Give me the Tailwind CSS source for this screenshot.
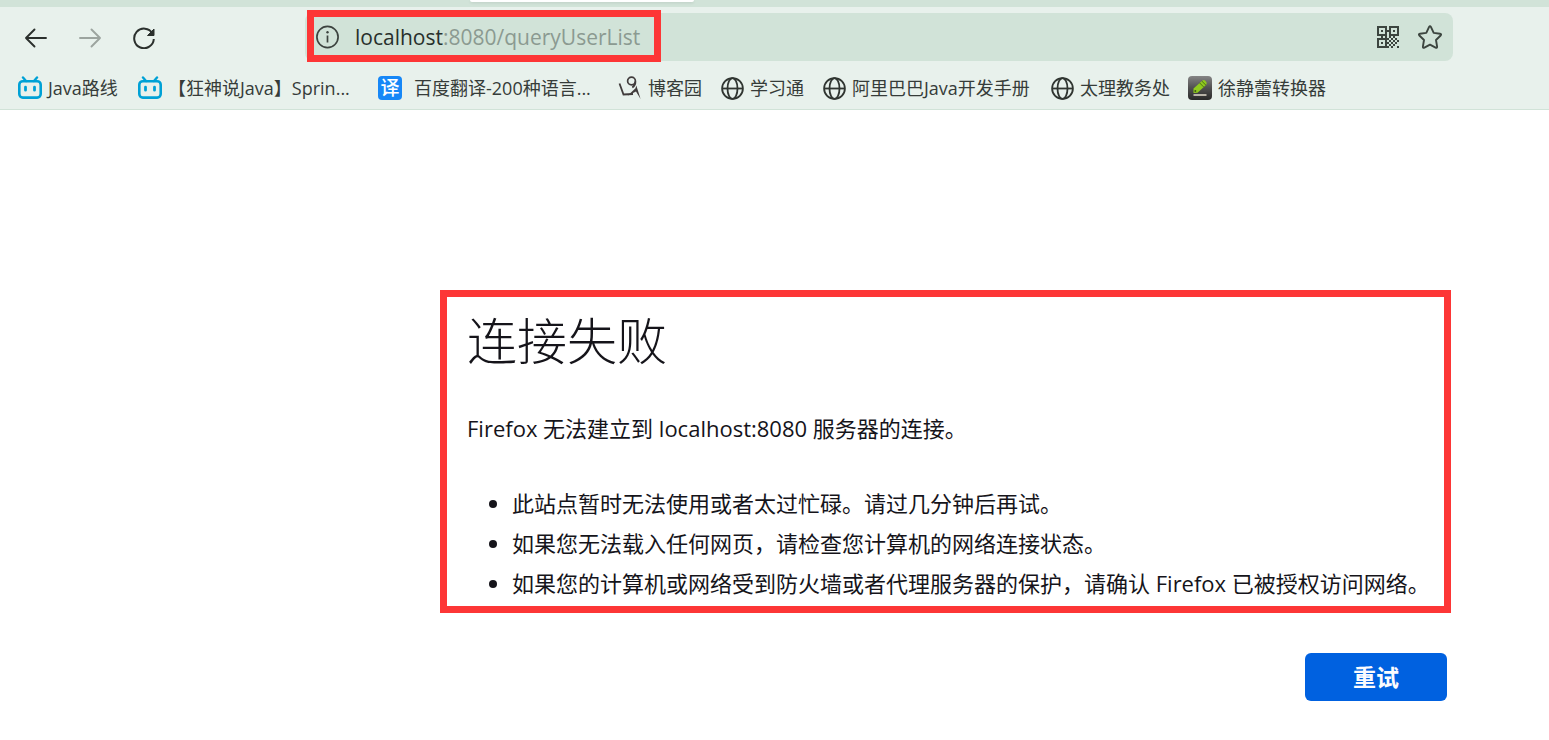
<!DOCTYPE html>
<html lang="zh-CN">
<head>
<meta charset="utf-8">
<meta name="viewport" content="width=device-width, initial-scale=1">
<title>连接失败</title>
<script src="https://cdn.jsdelivr.net/npm/@tailwindcss/browser@4"></script>
</head>
<body class="bg-white font-['Open_Sans','Noto_Sans_CJK_SC',sans-serif] text-[#15141a]">
<svg class="hidden" aria-hidden="true">
  <symbol id="tv" viewBox="0 0 24 24">
    <path d="M5 1.500 8 5M19 1.500 16 5" stroke="#00a1d6" stroke-width="2.400" stroke-linecap="round" fill="none"/>
    <rect x="1.300" y="5.200" width="21.400" height="16.400" rx="3.500" fill="none" stroke="#00a1d6" stroke-width="2.600"/>
    <path d="M7.500 11.200v3M16.500 11.200v3" stroke="#00a1d6" stroke-width="2.800" stroke-linecap="round"/>
  </symbol>
  <symbol id="globe" viewBox="0 0 24 24">
    <g fill="none" stroke="#303531" stroke-width="1.800"><circle cx="12.500" cy="12.500" r="10.400"/><ellipse cx="12.500" cy="12.500" rx="5" ry="10.400"/><path d="M2 12.500h21"/></g>
  </symbol>
</svg>

<header class="border-b border-[#d1e3d8] bg-[#e8f1ec]">
  <div class="h-[7px] bg-[#d1e3d8] pl-[470px]">
    <div class="h-[2px] w-56 rounded-b-sm bg-white shadow-sm"></div>
  </div>
  <div class="flex items-center pt-[6px] pr-24">
    <nav class="flex w-[305px] shrink-0 items-center gap-[30px] pl-6" aria-label="导航">
      <button class="size-6" aria-label="后退"><svg viewBox="0 0 24 24" fill="none" stroke="#2b302d" stroke-width="1.900" stroke-linecap="round" stroke-linejoin="round"><path d="M22 13H2M10.500 4.500 2 13l8.500 8.500"/></svg></button>
      <button class="size-6" aria-label="前进"><svg viewBox="0 0 24 24" fill="none" stroke="#9ca49f" stroke-width="1.900" stroke-linecap="round" stroke-linejoin="round"><path d="M2 13h20M13.500 4.500 22 13l-8.500 8.500"/></svg></button>
      <button class="size-6" aria-label="刷新"><svg viewBox="0 0 24 24" fill="none" stroke="#2b302d" stroke-width="2"><path d="M20.500 8.500A9.800 9.800 0 1 0 21.800 14"/><path d="M22 4v6.500h-6.500z" fill="#2b302d" stroke-width="1" stroke-linejoin="round"/></svg></button>
    </nav>
    <form class="flex h-12 min-w-0 flex-1 items-center rounded-lg bg-[#d1e3d8] pr-[10px]">
      <div class="relative flex h-12 w-[356px] items-center gap-4 pl-[10px]">
        <svg class="size-6 shrink-0" viewBox="0 0 24 24" fill="none" stroke="#3c433f" stroke-width="1.700"><circle cx="12.500" cy="12" r="10.600"/><path d="M12.500 10.500v7"/><circle cx="12.500" cy="7.300" r="1.200" fill="#3c433f" stroke="none"/></svg>
        <div role="textbox" contenteditable="true" spellcheck="false" aria-label="地址" class="pt-[2px] text-[21px] whitespace-nowrap text-[#8b9a91] outline-none"><span class="text-[#28302c]">localhost</span>:8080/queryUserList</div>
        <div class="pointer-events-none absolute -top-[3px] right-0 -bottom-px left-[2px] border-[7px] border-[#fd3636]"></div>
      </div>
      <button type="button" class="ml-auto size-6" aria-label="二维码"><svg viewBox="0 0 24 24" fill="#3c453f" shape-rendering="crispEdges"><path fill-rule="evenodd" d="M1 1h10v10H1zM3 3v6h6V3zM13 1h10v10H13zM15 3v6h6V3zM1 13h10v10H1zM3 15v6h6v-6z"/><path d="M5 5h2v2H5zM17 5h2v2h-2zM5 17h2v2H5zM11 5h2v2h-2zM5 11h2v2H5zM9 11h2v2H9zM13 11h2v2h-2zM17 11h2v2h-2zM11 13h2v2h-2zM15 13h2v2h-2zM19 13h2v2h-2zM13 15h2v2h-2zM17 15h2v2h-2zM21 15h2v2h-2zM11 17h2v2h-2zM15 17h2v2h-2zM19 17h2v2h-2zM13 19h2v2h-2zM17 19h2v2h-2zM11 21h2v2h-2zM15 21h2v2h-2zM21 21h2v2h-2z"/></svg></button>
      <button type="button" class="ml-[17px] size-[26px]" aria-label="收藏"><svg viewBox="0 0 26 26" fill="none" stroke="#3c453f" stroke-width="1.900" stroke-linejoin="round"><path d="M12.100 2.900Q13 1.300 13.900 2.900L16.700 8.900 23 9.800Q24.900 10.200 23.600 11.500L19 16 20.100 22.600Q20.200 24.400 18.600 23.700L13 20.600 7.400 23.700Q5.800 24.400 5.900 22.600L7 16 2.400 11.500Q1.100 10.200 3 9.800L9.300 8.900Z"/></svg></button>
    </form>
  </div>
  <nav class="flex h-12 items-center gap-[18px] pt-[6px] pl-[18px] text-[18px] whitespace-nowrap text-[#363c39]" aria-label="书签">
    <a href="#" class="flex items-center gap-[6px]"><svg class="size-6"><use href="#tv"/></svg><span class="w-[72px]">Java路线</span></a>
    <a href="#" class="flex items-center gap-[6px]"><svg class="size-6"><use href="#tv"/></svg><span class="w-48">【狂神说Java】Sprin...</span></a>
    <a href="#" class="flex items-center gap-[6px]"><span class="flex size-6 items-center justify-center rounded-sm bg-[#1687f7] text-[19px] font-medium text-white">译</span><span class="w-48 pl-[6px]">百度翻译-200种语言...</span></a>
    <a href="#" class="flex items-center gap-[6px]"><svg class="size-6" viewBox="0 0 24 24" fill="none" stroke="#413c3c"><circle cx="13.500" cy="5" r="3.900" stroke-width="1.700"/><path d="M17.400 5.500C17.500 8.500 16.500 10 14.300 11.500" stroke-width="1.800"/><path d="M18.300 9.500 22.600 23 18 15.500 9.500 19.800 17.500 12.300z" fill="#413c3c" stroke="none"/><path d="M1.500 7.500 5.500 18.500 15 18" stroke-width="1.800"/></svg><span>博客园</span></a>
    <a href="#" class="flex items-center gap-[6px]"><svg class="size-6"><use href="#globe"/></svg><span>学习通</span></a>
    <a href="#" class="flex items-center gap-[6px]"><svg class="size-6"><use href="#globe"/></svg><span class="w-[180px]">阿里巴巴Java开发手册</span></a>
    <a href="#" class="flex items-center gap-[6px]"><svg class="size-6"><use href="#globe"/></svg><span>太理教务处</span></a>
    <a href="#" class="flex items-center gap-[6px]"><svg class="size-6" viewBox="0 0 24 24"><defs><linearGradient id="tile" x2="0" y2="1"><stop stop-color="#858585"/><stop offset=".5" stop-color="#505050"/><stop offset="1" stop-color="#292929"/></linearGradient></defs><rect width="24" height="24" rx="4" fill="url(#tile)"/><path d="M5.500 17V12.500L14.500 4.500Q16 3.500 17.500 5L18.500 6.500Q19 8 18 9L9.500 16.700z" fill="#8fca1e"/><path d="m11.500 6.800 4.500 4.500M13.700 5l4.300 4.300" stroke="#4e7315" stroke-width="1"/><circle cx="7.300" cy="15" r="1" fill="#3e5a18"/><path d="M5.500 19h13" stroke="#d9d2c5" stroke-width="1.600"/></svg><span>徐静蕾转换器</span></a>
  </nav>
</header>

<main class="pt-[180px] pr-[98px] pl-[440px]">
  <section class="border-[7px] border-[#fd3636] pt-[14px] pb-[3px] pl-5 text-[22px] leading-10">
    <h1 class="text-[50px] leading-[60px] font-light">连接失败</h1>
    <p class="mt-[37px]">Firefox 无法建立到 localhost:8080 服务器的连接。</p>
    <ul class="mt-[35px] list-disc pl-[45px] whitespace-nowrap">
      <li>此站点暂时无法使用或者太过忙碌。请过几分钟后再试。</li>
      <li>如果您无法载入任何网页，请检查您计算机的网络连接状态。</li>
      <li>如果您的计算机或网络受到防火墙或者代理服务器的保护，请确认 Firefox 已被授权访问网络。</li>
    </ul>
  </section>
  <div class="mt-10 flex justify-end pr-1">
    <button class="h-12 w-[142px] rounded-md bg-[#0061e0] text-[23px] font-bold text-[#fbfbfe]">重试</button>
  </div>
</main>
</body>
</html>
